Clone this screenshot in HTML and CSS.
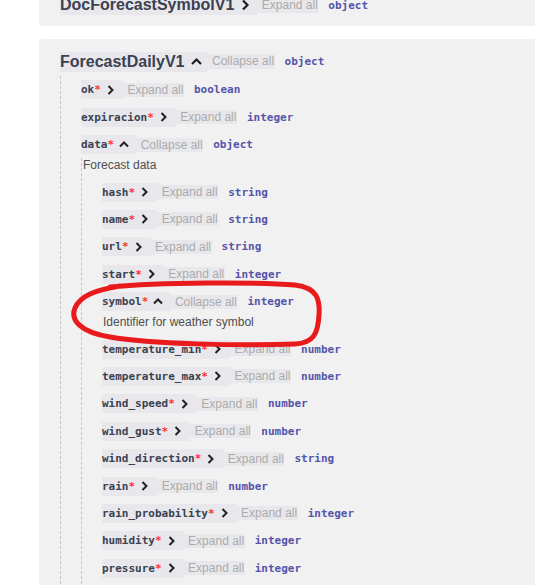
FILE: index.html
```html
<!DOCTYPE html>
<html>
<head>
<meta charset="utf-8">
<link rel="stylesheet" href="styles.css">
</head>
<body>
<div class="page">
  <div class="card card-first">
    <div class="title-row">
      <span class="tbox"><span class="tname">DocForecastSymbolV1</span><svg class="tchev" viewBox="0 0 23 12"><polyline points="9,1.5 13.5,6 9,10.5"/></svg></span><span class="ctrl">Expand all</span><span class="ptype">object</span>
    </div>
  </div>

  <div class="card card-main">
    <div class="title-row">
      <span class="tbox"><span class="tname">ForecastDailyV1</span><svg class="tchev" viewBox="0 0 23 12"><polyline points="7,8 11.5,3.5 16,8"/></svg></span><span class="ctrl">Collapse all</span><span class="ptype">object</span>
    </div>
    <div class="props">
      <div class="prop"><span class="pbox"><span class="pname">ok</span><span class="star">*</span><svg class="chev" viewBox="0 0 22 10"><polyline points="7.5,1 11.5,5 7.5,9"/></svg></span><span class="ctrl">Expand all</span><span class="ptype">boolean</span></div>
      <div class="prop"><span class="pbox"><span class="pname">expiracion</span><span class="star">*</span><svg class="chev" viewBox="0 0 22 10"><polyline points="7.5,1 11.5,5 7.5,9"/></svg></span><span class="ctrl">Expand all</span><span class="ptype">integer</span></div>
      <div class="prop"><span class="pbox"><span class="pname">data</span><span class="star">*</span><svg class="chev" viewBox="0 0 22 10"><polyline points="6,6.5 10,2.5 14,6.5"/></svg></span><span class="ctrl">Collapse all</span><span class="ptype">object</span></div>
      <div class="nested">
        <p class="desc">Forecast data</p>
        <div class="subprops">
          <div class="prop"><span class="pbox"><span class="pname">hash</span><span class="star">*</span><svg class="chev" viewBox="0 0 22 10"><polyline points="7.5,1 11.5,5 7.5,9"/></svg></span><span class="ctrl">Expand all</span><span class="ptype">string</span></div>
          <div class="prop"><span class="pbox"><span class="pname">name</span><span class="star">*</span><svg class="chev" viewBox="0 0 22 10"><polyline points="7.5,1 11.5,5 7.5,9"/></svg></span><span class="ctrl">Expand all</span><span class="ptype">string</span></div>
          <div class="prop"><span class="pbox"><span class="pname">url</span><span class="star">*</span><svg class="chev" viewBox="0 0 22 10"><polyline points="7.5,1 11.5,5 7.5,9"/></svg></span><span class="ctrl">Expand all</span><span class="ptype">string</span></div>
          <div class="prop"><span class="pbox"><span class="pname">start</span><span class="star">*</span><svg class="chev" viewBox="0 0 22 10"><polyline points="7.5,1 11.5,5 7.5,9"/></svg></span><span class="ctrl">Expand all</span><span class="ptype">integer</span></div>
          <div class="prop"><span class="pbox"><span class="pname">symbol</span><span class="star">*</span><svg class="chev" viewBox="0 0 22 10"><polyline points="6,6.5 10,2.5 14,6.5"/></svg></span><span class="ctrl">Collapse all</span><span class="ptype">integer</span></div>
          <div class="plain">
            <p class="desc">Identifier for weather symbol</p>
          </div>
          <div class="prop"><span class="pbox"><span class="pname">temperature_min</span><span class="star">*</span><svg class="chev" viewBox="0 0 22 10"><polyline points="7.5,1 11.5,5 7.5,9"/></svg></span><span class="ctrl">Expand all</span><span class="ptype">number</span></div>
          <div class="prop"><span class="pbox"><span class="pname">temperature_max</span><span class="star">*</span><svg class="chev" viewBox="0 0 22 10"><polyline points="7.5,1 11.5,5 7.5,9"/></svg></span><span class="ctrl">Expand all</span><span class="ptype">number</span></div>
          <div class="prop"><span class="pbox"><span class="pname">wind_speed</span><span class="star">*</span><svg class="chev" viewBox="0 0 22 10"><polyline points="7.5,1 11.5,5 7.5,9"/></svg></span><span class="ctrl">Expand all</span><span class="ptype">number</span></div>
          <div class="prop"><span class="pbox"><span class="pname">wind_gust</span><span class="star">*</span><svg class="chev" viewBox="0 0 22 10"><polyline points="7.5,1 11.5,5 7.5,9"/></svg></span><span class="ctrl">Expand all</span><span class="ptype">number</span></div>
          <div class="prop"><span class="pbox"><span class="pname">wind_direction</span><span class="star">*</span><svg class="chev" viewBox="0 0 22 10"><polyline points="7.5,1 11.5,5 7.5,9"/></svg></span><span class="ctrl">Expand all</span><span class="ptype">string</span></div>
          <div class="prop"><span class="pbox"><span class="pname">rain</span><span class="star">*</span><svg class="chev" viewBox="0 0 22 10"><polyline points="7.5,1 11.5,5 7.5,9"/></svg></span><span class="ctrl">Expand all</span><span class="ptype">number</span></div>
          <div class="prop"><span class="pbox"><span class="pname">rain_probability</span><span class="star">*</span><svg class="chev" viewBox="0 0 22 10"><polyline points="7.5,1 11.5,5 7.5,9"/></svg></span><span class="ctrl">Expand all</span><span class="ptype">integer</span></div>
          <div class="prop"><span class="pbox"><span class="pname">humidity</span><span class="star">*</span><svg class="chev" viewBox="0 0 22 10"><polyline points="7.5,1 11.5,5 7.5,9"/></svg></span><span class="ctrl">Expand all</span><span class="ptype">integer</span></div>
          <div class="prop"><span class="pbox"><span class="pname">pressure</span><span class="star">*</span><svg class="chev" viewBox="0 0 22 10"><polyline points="7.5,1 11.5,5 7.5,9"/></svg></span><span class="ctrl">Expand all</span><span class="ptype">integer</span></div>
          <div class="prop"><span class="pbox"><span class="pname">uv_index</span><span class="star">*</span><svg class="chev" viewBox="0 0 22 10"><polyline points="7.5,1 11.5,5 7.5,9"/></svg></span><span class="ctrl">Expand all</span><span class="ptype">integer</span></div>
        </div>
      </div>
    </div>
  </div>

  <svg class="annotation" viewBox="0 0 535 585" width="535" height="585">
    <path d="M 110,287 C 160,282 260,282 295,285 C 318,288 320,300 319,315 C 318,333 314,343 295,344 C 240,346 150,344 110,337 C 80,332 70,320 75,308 C 80,296 95,290 120,286"/>
  </svg>
</div>
</body>
</html>
```

FILE: styles.css
```css
html, body {
  margin: 0;
  padding: 0;
  background: #ffffff;
  overflow: hidden;
}

.page {
  position: relative;
  width: 535px;
  height: 585px;
  overflow: hidden;
}

.card {
  margin-left: 39px;
  margin-right: -40px;
  background: #f1f1f1;
  border-radius: 4px;
  padding: 12px 21px;
}

.card-first {
  margin-top: -17px;
  padding-bottom: 11px;
}

.card-main {
  margin-top: 13px;
  padding-top: 12.5px;
  padding-bottom: 40px;
}

.title-row {
  display: flex;
  align-items: center;
  height: 20px;
}

.tbox {
  display: flex;
  align-items: center;
  height: 20px;
  background: #e8e8ec;
}

.tname {
  font-family: "Liberation Sans", Arial, sans-serif;
  font-weight: bold;
  font-size: 16px;
  line-height: 20px;
  color: #3b4151;
}

.tchev {
  width: 23px;
  height: 12px;
  fill: none;
  stroke: #222;
  stroke-width: 2.2;
}

.ctrl {
  display: inline-block;
  height: 14px;
  line-height: 14px;
  padding-left: 4.5px;
  padding-right: 0.5px;
  background: #e8e8ec;
  font-family: "Liberation Sans", Arial, sans-serif;
  font-size: 12px;
  color: #ababab;
  white-space: nowrap;
}

.title-row .ctrl {
  height: 15px;
  line-height: 15px;
}

.ptype {
  margin-left: 10px;
  font-family: "DejaVu Sans Mono", monospace;
  font-weight: bold;
  font-size: 11px;
  color: #5555aa;
  white-space: nowrap;
}

.props {
  margin-top: 4.6px;
  border-left: 1px dashed #c4c4c4;
  padding-left: 20px;
}

.prop {
  display: flex;
  align-items: center;
  height: 27.4px;
}

.pbox {
  display: flex;
  align-items: center;
  height: 19px;
  background: #e8e8ec;
}

.pname {
  font-family: "DejaVu Sans Mono", monospace;
  font-weight: bold;
  font-size: 11px;
  color: #3b4151;
  white-space: nowrap;
}

.star {
  font-family: "DejaVu Sans Mono", monospace;
  font-weight: bold;
  font-size: 11px;
  color: #f33;
}

.chev {
  width: 22px;
  height: 10px;
  fill: none;
  stroke: #222;
  stroke-width: 2;
}

.nested {
  border-left: 1px dashed #c4c4c4;
}

.desc {
  margin: 0 0 5.5px 0;
  padding-left: 1px;
  font-family: "Liberation Sans", Arial, sans-serif;
  font-size: 12px;
  line-height: 14.6px;
  color: #4f4f4f;
}

.subprops {
  padding-left: 20px;
}

.annotation {
  position: absolute;
  left: 0;
  top: 0;
  pointer-events: none;
  fill: none;
  stroke: #e81a1c;
  stroke-width: 5;
  stroke-linecap: round;
  stroke-linejoin: round;
}
```
